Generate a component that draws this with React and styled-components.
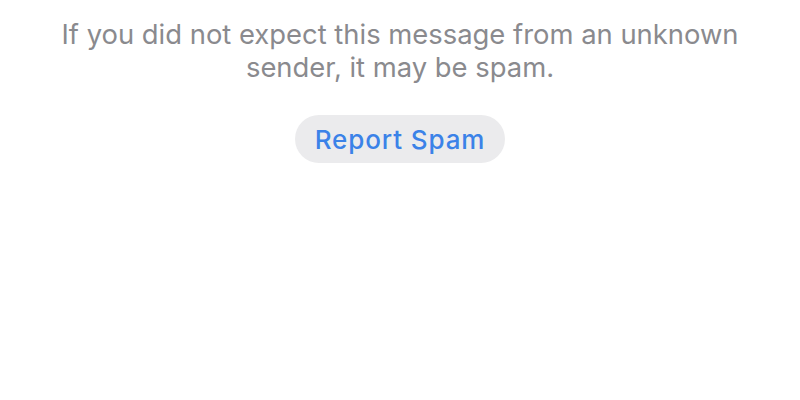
import React from 'react';
import styled, { createGlobalStyle } from 'styled-components';

const GlobalStyle = createGlobalStyle`
  html, body {
    margin: 0;
    padding: 0;
    background: #ffffff;
  }
  body {
    font-family: Inter, "Noto Sans", "Liberation Sans", sans-serif;
    -webkit-font-smoothing: antialiased;
  }
`;

const Screen = styled.main`
  width: 800px;
  height: 400px;
  display: flex;
  flex-direction: column;
  align-items: center;
  padding-top: 18px;
  box-sizing: border-box;
  background: #ffffff;
`;

const Notice = styled.p`
  margin: 0;
  width: 700px;
  text-align: center;
  font-size: 27.4px;
  line-height: 33px;
  font-weight: 400;
  color: #8a8a8e;
`;

const SpamButton = styled.button`
  margin-top: 31px;
  height: 48px;
  padding: 0 20px;
  border: none;
  border-radius: 24px;
  background: #ebebed;
  color: #3b82e8;
  font-family: inherit;
  font-size: 26px;
  font-weight: 500;
  letter-spacing: 0.9px;
  cursor: pointer;
`;

export default function App() {
  return (
    <>
      <GlobalStyle />
      <Screen>
        <Notice>
          If you did not expect this message from an unknown sender, it may be spam.
        </Notice>
        <SpamButton>Report Spam</SpamButton>
      </Screen>
    </>
  );
}
